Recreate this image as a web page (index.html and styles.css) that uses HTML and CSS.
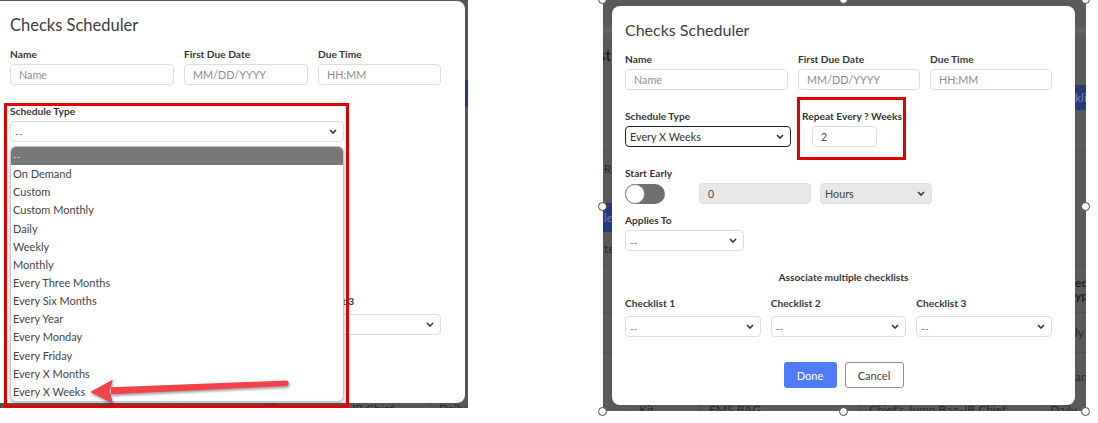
FILE: index.html
```html
<!DOCTYPE html>
<html lang="en">
<head>
    <meta charset="UTF-8">
    <meta name="viewport" content="width=device-width, initial-scale=1.0">
    <link rel="stylesheet" href="styles.css">
</head>
<body>
<div class="canvas">

    <!-- Capture 1: the schedule type list opened -->
    <div class="shot shot-left">
        <div class="behind behind-left">
            <div class="bl-head"></div>
            <div class="bl-btn"><span class="blue-chip"></span></div>
            <div class="bl-fill"></div>
            <div class="table-row bl-last">
                <span class="cell"></span>
                <span class="cell">Chief's Jump Bag-JB Chief</span>
                <span class="cell">Daily</span>
            </div>
        </div>

        <div class="modal modal-left">
            <h2 class="modal-title">Checks Scheduler</h2>
            <div class="row-top">
                <div class="field">
                    <label class="lbl">Name</label>
                    <div class="input ph">Name</div>
                </div>
                <div class="field">
                    <label class="lbl">First Due Date</label>
                    <div class="input ph">MM/DD/YYYY</div>
                </div>
                <div class="field">
                    <label class="lbl">Due Time</label>
                    <div class="input ph">HH:MM</div>
                </div>
            </div>
            <div class="row-schedule">
                <div class="field schedule-wide">
                    <label class="lbl">Schedule Type</label>
                    <div class="select"><span class="dash">--</span><svg class="chev" viewBox="0 0 8 5"><path d="M1 1l3 3 3-3"/></svg></div>
                </div>
            </div>
            <div class="row-start">
                <label class="lbl">Start Early</label>
                <div class="start-controls">
                    <span class="toggle"><span class="knob"></span></span>
                    <div class="input input-grey num">0</div>
                    <div class="select select-grey unit"><span>Hours</span><svg class="chev" viewBox="0 0 8 5"><path d="M1 1l3 3 3-3"/></svg></div>
                </div>
            </div>
            <div class="row-applies">
                <label class="lbl">Applies To</label>
                <div class="select applies"><span class="dash">--</span><svg class="chev" viewBox="0 0 8 5"><path d="M1 1l3 3 3-3"/></svg></div>
            </div>
            <p class="assoc">Associate multiple checklists</p>
            <div class="row-checklists">
                <div class="field">
                    <label class="lbl">Checklist 1</label>
                    <div class="select"><span class="dash">--</span><svg class="chev" viewBox="0 0 8 5"><path d="M1 1l3 3 3-3"/></svg></div>
                </div>
                <div class="field">
                    <label class="lbl">Checklist 2</label>
                    <div class="select"><span class="dash">--</span><svg class="chev" viewBox="0 0 8 5"><path d="M1 1l3 3 3-3"/></svg></div>
                </div>
                <div class="field">
                    <label class="lbl">Checklist 3</label>
                    <div class="select"><span class="dash">--</span><svg class="chev" viewBox="0 0 8 5"><path d="M1 1l3 3 3-3"/></svg></div>
                </div>
            </div>
            <div class="actions">
                <button class="btn btn-done">Done</button>
                <button class="btn btn-cancel">Cancel</button>
            </div>
        </div>

        <ul class="dropdown">
            <li class="on">--</li>
            <li>On Demand</li>
            <li>Custom</li>
            <li>Custom Monthly</li>
            <li>Daily</li>
            <li>Weekly</li>
            <li>Monthly</li>
            <li>Every Three Months</li>
            <li>Every Six Months</li>
            <li>Every Year</li>
            <li>Every Monday</li>
            <li>Every Friday</li>
            <li>Every X Months</li>
            <li>Every X Weeks</li>
        </ul>

        <div class="mark mark-left"></div>
        <svg class="arrow" viewBox="0 0 468 408" width="468" height="408">
            <path d="M111 387.2 L286 380.6 A2.7 2.7 0 0 1 286 386 L111 394.2 Z"/>
            <path d="M90 392 L113 379.5 L109.5 390.8 L113 403.5 Z"/>
        </svg>
    </div>

    <!-- Capture 2: Every X Weeks selected -->
    <div class="shot shot-right">
        <div class="behind behind-right">
            <div class="bg-row h27"></div>
            <div class="bg-row h6 band"></div>
            <div class="bg-row h44"><span class="peek-l heading">Checklist</span></div>
            <div class="bg-row h8"></div>
            <div class="bg-row h25"><span></span><span class="peek-r blue-btn">klist</span></div>
            <div class="bg-row h40"></div>
            <div class="bg-row h35 ruled"><span class="peek-l">R</span></div>
            <div class="bg-row h18"></div>
            <div class="bg-row h29 blue-band"><span class="peek-l band-text">le</span></div>
            <div class="bg-row h33"><span class="peek-l">te</span></div>
            <div class="bg-row h47 ruled"><span></span><span class="peek-r th">ed<br>yp</span></div>
            <div class="bg-row h40 ruled"><span></span><span class="peek-r">ly</span></div>
            <div class="bg-row h48 ruled"><span></span><span class="peek-r">an</span></div>
            <div class="table-row br-last">
                <span class="cell"></span>
                <span class="cell">Kit</span>
                <span class="cell">EMS BAG</span>
                <span class="cell">Chief's Jump Bag-JB Chief</span>
                <span class="cell">Daily</span>
            </div>
        </div>

        <div class="modal modal-right">
            <h2 class="modal-title">Checks Scheduler</h2>
            <div class="row-top">
                <div class="field">
                    <label class="lbl">Name</label>
                    <div class="input ph">Name</div>
                </div>
                <div class="field">
                    <label class="lbl">First Due Date</label>
                    <div class="input ph">MM/DD/YYYY</div>
                </div>
                <div class="field">
                    <label class="lbl">Due Time</label>
                    <div class="input ph">HH:MM</div>
                </div>
            </div>
            <div class="row-schedule">
                <div class="field schedule-narrow">
                    <label class="lbl">Schedule Type</label>
                    <div class="select select-focus"><span>Every X Weeks</span><svg class="chev" viewBox="0 0 8 5"><path d="M1 1l3 3 3-3"/></svg></div>
                </div>
                <div class="field repeat">
                    <label class="lbl">Repeat Every ? Weeks</label>
                    <div class="input repeat-input">2</div>
                </div>
            </div>
            <div class="row-start">
                <label class="lbl">Start Early</label>
                <div class="start-controls">
                    <span class="toggle"><span class="knob"></span></span>
                    <div class="input input-grey num">0</div>
                    <div class="select select-grey unit"><span>Hours</span><svg class="chev" viewBox="0 0 8 5"><path d="M1 1l3 3 3-3"/></svg></div>
                </div>
            </div>
            <div class="row-applies">
                <label class="lbl">Applies To</label>
                <div class="select applies"><span class="dash">--</span><svg class="chev" viewBox="0 0 8 5"><path d="M1 1l3 3 3-3"/></svg></div>
            </div>
            <p class="assoc">Associate multiple checklists</p>
            <div class="row-checklists">
                <div class="field">
                    <label class="lbl">Checklist 1</label>
                    <div class="select"><span class="dash">--</span><svg class="chev" viewBox="0 0 8 5"><path d="M1 1l3 3 3-3"/></svg></div>
                </div>
                <div class="field">
                    <label class="lbl">Checklist 2</label>
                    <div class="select"><span class="dash">--</span><svg class="chev" viewBox="0 0 8 5"><path d="M1 1l3 3 3-3"/></svg></div>
                </div>
                <div class="field">
                    <label class="lbl">Checklist 3</label>
                    <div class="select"><span class="dash">--</span><svg class="chev" viewBox="0 0 8 5"><path d="M1 1l3 3 3-3"/></svg></div>
                </div>
            </div>
            <div class="actions">
                <button class="btn btn-done">Done</button>
                <button class="btn btn-cancel">Cancel</button>
            </div>
        </div>

        <div class="mark mark-right"></div>

        <!-- selection handles of the pasted image -->
        <span class="handle h-tl"></span>
        <span class="handle h-tc"></span>
        <span class="handle h-tr"></span>
        <span class="handle h-ml"></span>
        <span class="handle h-mr"></span>
        <span class="handle h-bl"></span>
        <span class="handle h-bc"></span>
        <span class="handle h-br"></span>
    </div>

</div>
</body>
</html>
```

FILE: styles.css
```css
body {
    margin: 0;
    background: #ffffff;
    font-family: Lato, "Open Sans", sans-serif;
    color: #333333;
}

.canvas {
    display: flex;
    align-items: flex-start;
    gap: 135px;
    width: 1098px;
    height: 423px;
    overflow: hidden;
}

.shot {
    position: relative;
    flex: none;
}

.shot-left {
    width: 468px;
    height: 408px;
    overflow: hidden;
}

.shot-right {
    width: 483px;
    height: 411px;
}

/* dimmed page sitting under each modal */
.behind {
    height: 100%;
    overflow: hidden;
    display: flex;
    flex-direction: column;
    color: #2a2a2a;
    font-size: 12px;
}

.behind-left {
    background: #575757;
}

.behind-right {
    background: #5a5a5a;
}

.bl-head {
    height: 80px;
    flex: none;
}

.bl-btn {
    height: 27px;
    flex: none;
    display: flex;
    justify-content: flex-end;
}

.blue-chip {
    width: 3px;
    background: #263a7a;
}

.bl-fill {
    flex: 1;
}

.table-row {
    display: grid;
    flex: none;
    font-size: 12px;
    line-height: 14px;
}

.table-row .cell {
    padding-left: 8px;
    white-space: nowrap;
    overflow: hidden;
    border-left: 1px solid #4d4d4d;
}

.bl-last {
    height: 6px;
    grid-template-columns: 248px 182px 1fr;
}

.br-last {
    height: 11px;
    padding-top: 3px;
    grid-template-columns: 27px 70px 160px 181px 1fr;
}

.bg-row {
    flex: none;
    display: flex;
    justify-content: space-between;
    align-items: center;
}

.h6 { height: 6px; }
.h8 { height: 8px; }
.h18 { height: 18px; }
.h25 { height: 25px; }
.h27 { height: 27px; }
.h29 { height: 29px; }
.h33 { height: 33px; }
.h35 { height: 35px; }
.h40 { height: 40px; }
.h44 { height: 44px; }
.h47 { height: 47px; }
.h48 { height: 48px; }

.band {
    background: #636363;
}

.ruled {
    border-top: 1px solid #4f4f4f;
    box-sizing: border-box;
}

.peek-l {
    width: 9px;
    overflow: hidden;
    white-space: nowrap;
    padding-left: 1px;
}

.peek-l.heading {
    direction: rtl;
    font-size: 15px;
    font-weight: 700;
    padding-left: 0;
    width: 8px;
    color: #202020;
}

.peek-r {
    width: 11px;
    overflow: hidden;
    white-space: nowrap;
}

.peek-r.th {
    font-weight: 700;
    line-height: 13px;
    color: #202020;
}

.blue-btn {
    align-self: stretch;
    display: flex;
    align-items: center;
    background: #26397a;
    color: #7d89b3;
}

.blue-band {
    background: #26397a;
    margin-right: 11px;
}

.band-text {
    color: #6d7aa8;
}

/* modal */
.modal {
    position: absolute;
    box-sizing: border-box;
    background: #ffffff;
    border-radius: 8px;
    padding: 14px 13px 0;
}

.modal-right {
    left: 9px;
    top: 6px;
    width: 463px;
    height: 399px;
}

.modal-left {
    left: -3px;
    top: 1px;
    width: 468px;
    height: 402px;
    border-radius: 0 8px 8px 0;
}

.modal-title {
    margin: 0 0 12px;
    font-size: 16px;
    font-weight: 400;
    line-height: 20px;
    color: #3d3d3d;
}

.modal-left .modal-title {
    font-size: 16.5px;
}

.lbl {
    display: block;
    font-size: 10.2px;
    font-weight: 700;
    line-height: 14px;
    color: #363636;
    margin-bottom: 3px;
    white-space: nowrap;
}

.row-top {
    display: grid;
    grid-template-columns: 163px 122px 122px;
    column-gap: 10px;
}

.modal-left .row-top {
    grid-template-columns: 164px 124px 123px;
}

.input {
    box-sizing: border-box;
    height: 21px;
    border: 1px solid #dedede;
    border-radius: 4px;
    padding: 0 8px;
    display: flex;
    align-items: center;
    font-size: 10.5px;
    color: #444444;
}

.input.ph {
    font-size: 10.8px;
    color: #8c8c8c;
}

.input-grey {
    background: #e8e8e8;
}

.select {
    box-sizing: border-box;
    height: 21px;
    border: 1px solid #dedede;
    border-radius: 4px;
    padding: 0 6px 0 4px;
    display: flex;
    align-items: center;
    justify-content: space-between;
    font-size: 10.8px;
    color: #444444;
    background: #ffffff;
}

.select .dash {
    font-size: 10px;
    color: #666666;
    padding-top: 3px;
}

.select-grey {
    background: #e8e8e8;
}

.select-focus {
    border: 1.5px solid #222222;
    color: #333333;
}

.chev {
    width: 8px;
    height: 5px;
    flex: none;
    fill: none;
    stroke: #333333;
    stroke-width: 1.6;
}

.row-schedule {
    margin-top: 19px;
    display: flex;
    gap: 11px;
}

.schedule-wide {
    width: 334px;
}

.schedule-narrow {
    width: 166px;
}

.repeat-input {
    width: 65px;
    margin-left: 10px;
}

.row-start {
    margin-top: 19px;
}

.start-controls {
    display: flex;
    align-items: center;
    height: 21px;
}

.toggle {
    position: relative;
    width: 40px;
    height: 20px;
    border-radius: 10px;
    background: #6f6f6f;
    margin-right: 34px;
}

.knob {
    position: absolute;
    left: 0;
    top: 0;
    box-sizing: border-box;
    width: 20px;
    height: 20px;
    border-radius: 50%;
    background: #ffffff;
    border: 1px solid #8a8a8a;
}

.num {
    width: 112px;
    margin-right: 9px;
}

.unit {
    width: 112px;
}

.row-applies {
    margin-top: 9px;
}

.applies {
    width: 119px;
}

.assoc {
    margin: 19px 0 0;
    text-align: center;
    font-size: 10.2px;
    font-weight: 700;
    line-height: 14px;
    color: #363636;
}

.row-checklists {
    margin-top: 12px;
    width: 427px;
    display: grid;
    grid-template-columns: repeat(3, 1fr);
    column-gap: 10px;
}

.row-checklists .lbl {
    margin-bottom: 6px;
}

.modal-left .assoc {
    margin-top: 22px;
}

.modal-left .row-checklists {
    width: 431px;
}

.actions {
    margin-top: 25px;
    display: flex;
    justify-content: center;
    gap: 8px;
}

.btn {
    height: 26px;
    border-radius: 3px;
    font-family: inherit;
    font-size: 11px;
    padding: 0;
}

.btn-done {
    width: 53px;
    border: none;
    background: #4f7dfa;
    color: #ffffff;
}

.btn-cancel {
    width: 59px;
    border: 1px solid #8e8e8e;
    background: #ffffff;
    color: #444444;
}

/* open option list */
.dropdown {
    position: absolute;
    left: 10px;
    top: 146px;
    width: 334px;
    margin: 0;
    padding: 0;
    list-style: none;
    box-sizing: border-box;
    background: #ffffff;
    border: 1px solid #c6c6c6;
    border-radius: 6px;
    box-shadow: 0 2px 4px rgba(0, 0, 0, 0.25);
    overflow: hidden;
    font-size: 11px;
    color: #444444;
}

.dropdown li {
    height: 18.15px;
    line-height: 18.15px;
    padding-left: 2px;
    white-space: nowrap;
}

.dropdown li.on {
    background: #777777;
    color: #d8d8d8;
    font-size: 10px;
}

/* annotations */
.mark {
    position: absolute;
    border: 3px solid #e40000;
    box-sizing: border-box;
}

.mark-left {
    left: 4px;
    top: 103px;
    width: 345px;
    height: 305px;
}

.mark-right {
    left: 194px;
    top: 97px;
    width: 109px;
    height: 63px;
}

.arrow {
    position: absolute;
    left: 0;
    top: 0;
    fill: #f2434b;
    filter: drop-shadow(1px 2px 1px rgba(0, 0, 0, 0.35));
}

.handle {
    position: absolute;
    width: 7px;
    height: 7px;
    border: 1.5px solid #4a4a4a;
    border-radius: 50%;
    background: #ffffff;
}

.h-tl { left: -5px; top: -5px; }
.h-tc { left: 236px; top: -5px; }
.h-tr { left: 478px; top: -5px; }
.h-ml { left: -5px; top: 202px; }
.h-mr { left: 478px; top: 202px; }
.h-bl { left: -5px; top: 407px; }
.h-bc { left: 236px; top: 407px; }
.h-br { left: 478px; top: 407px; }
```
